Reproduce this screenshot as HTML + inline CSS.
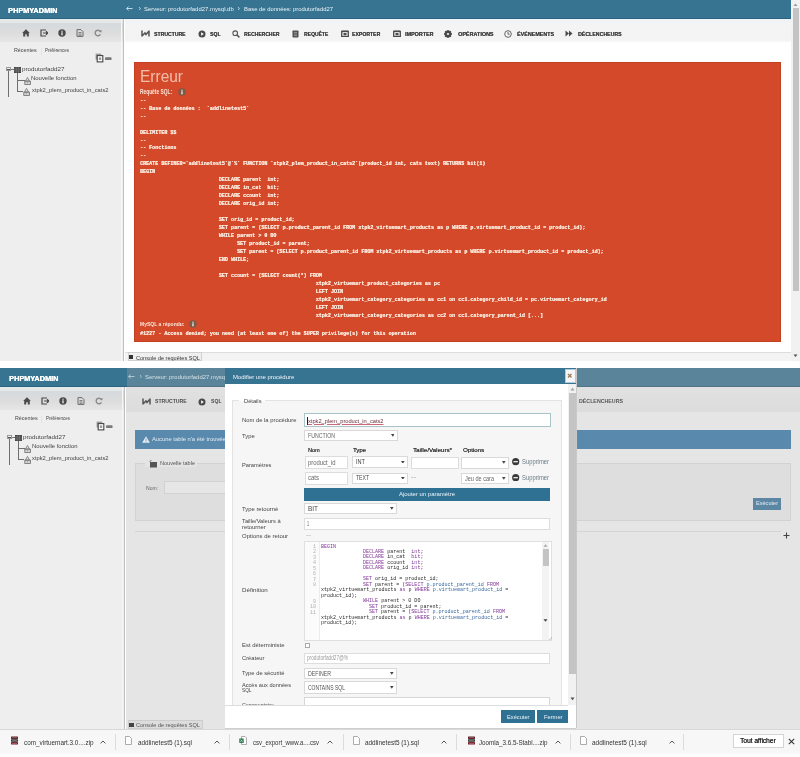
<!DOCTYPE html><html><head><meta charset="utf-8"><style>
*{margin:0;padding:0;box-sizing:border-box}
html,body{width:800px;height:757px;overflow:hidden;background:#fff;position:relative}
#r{position:absolute;left:0;top:0;width:800px;height:757px;overflow:hidden;background:#fff;will-change:transform}
#r>div,#r>svg{position:absolute}
#r>div{white-space:pre}
</style></head><body><div id="r">
<div style="left:124.5px;top:18.5px;width:666.5px;height:343px;background:#fff"></div>
<div style="left:0px;top:0px;width:800px;height:18.5px;background:#377492"></div>
<div style="left:0px;top:17.5px;width:800px;height:1px;background:#2d6380"></div>
<div style="left:8px;top:6.55px;font:bold 7.9px/7.9px 'Liberation Sans',sans-serif;color:#fff;transform:scaleX(0.9266);transform-origin:0 0;text-shadow:0.3px 0 0 #fff">PHPMYADMIN</div>
<div style="left:0px;top:18.5px;width:124px;height:342.5px;background:#eeeeee"></div>
<div style="left:0px;top:18.5px;width:124px;height:4.5px;background:#e4e8e9"></div>
<div style="left:0px;top:23.0px;width:124px;height:18.5px;background:linear-gradient(#d5dadd,#dcdcdc 50%,#e6e6e6)"></div>
<div style="left:121px;top:18.5px;width:1px;height:342.5px;background:#f6f6f6"></div>
<div style="left:123.2px;top:18.5px;width:1.2px;height:342.5px;background:#bebebe"></div>
<svg style="left:22.2px;top:28.8px" width="8" height="8" viewBox="0 0 8 8"><path d="M4 0.3 L7.8 4 L6.8 4 L6.8 7.6 L4.8 7.6 L4.8 5.2 L3.2 5.2 L3.2 7.6 L1.2 7.6 L1.2 4 L0.2 4 Z" fill="#4a4a4a"/></svg>
<svg style="left:40px;top:28.8px" width="8" height="8" viewBox="0 0 8 8"><path d="M6 1 H1 V7 H6" fill="none" stroke="#4a4a4a" stroke-width="1.2"/><path d="M3 4 H7.8 M6 2.3 L7.8 4 L6 5.7" fill="none" stroke="#4a4a4a" stroke-width="1.2"/></svg>
<svg style="left:57.8px;top:28.8px" width="8" height="8" viewBox="0 0 8 8"><circle cx="4" cy="4" r="3.7" fill="#4a4a4a"/><rect x="3.4" y="3.3" width="1.2" height="3" fill="#fff"/><circle cx="4" cy="2.2" r="0.65" fill="#fff"/></svg>
<svg style="left:75.8px;top:28.8px" width="8" height="8" viewBox="0 0 8 8"><path d="M1 0.6 H5 L7 2.6 V7.4 H1 Z" fill="none" stroke="#6a6a6a" stroke-width="1"/><path d="M2.5 3.5 H5.5 M2.5 5 H5.5 M2.5 6.3 H5.5" stroke="#6a6a6a" stroke-width="0.8"/></svg>
<svg style="left:94px;top:28.8px" width="8" height="8" viewBox="0 0 8 8"><path d="M6.6 3 A2.8 2.8 0 1 0 6.4 5.4" fill="none" stroke="#8a8a8a" stroke-width="1.4"/><path d="M5 2.6 L7.4 3.4 L7.6 0.8 Z" fill="#8a8a8a"/></svg>
<div style="left:13.8px;top:48.05px;font:normal 5.9px/5.9px 'Liberation Sans',sans-serif;color:#444;transform:scaleX(0.9080);transform-origin:0 0;">Récentes</div>
<div style="left:40.5px;top:47.5px;width:0.6px;height:7px;background:#e2e2e2"></div>
<div style="left:45.2px;top:48.05px;font:normal 5.9px/5.9px 'Liberation Sans',sans-serif;color:#444;transform:scaleX(0.7555);transform-origin:0 0;">Préférences</div>
<svg style="left:95px;top:52.5px" width="18" height="10" viewBox="0 0 18 10"><rect x="0.6" y="0.6" width="5.6" height="6" fill="#9a9a9a"/><rect x="2.2" y="2.6" width="5.6" height="6.3" fill="#fff" stroke="#444" stroke-width="1.1"/><rect x="3.8" y="4.4" width="2.4" height="2.6" fill="#999"/><rect x="10" y="4.2" width="6.6" height="2.8" rx="0.8" fill="#7a7a7a"/></svg>
<div style="left:6.4px;top:67.1px;width:4.5px;height:4.2px;border:0.8px solid #999;background:#f4f4f4"></div>
<div style="left:7.3px;top:69px;width:2.6px;height:0.6px;background:#555"></div>
<div style="left:8.2px;top:71.3px;width:0.8px;height:26px;background:#6f6f6f"></div>
<div style="left:10.9px;top:69.1px;width:3px;height:0.7px;background:#777"></div>
<svg style="left:13.9px;top:66.6px" width="7" height="6" viewBox="0 0 7 6"><rect x="0" y="0" width="7" height="6" fill="#454545"/><path d="M0 2 H7 M0 4 H7 M2.3 0 V6 M4.6 0 V6" stroke="#8a8a8a" stroke-width="0.5"/></svg>
<div style="left:21.75px;top:65.70px;font:normal 6px/6px 'Liberation Sans',sans-serif;color:#444;transform:scaleX(1.0441);transform-origin:0 0;">produtorfadd27</div>
<div style="left:17.1px;top:72.8px;width:0.8px;height:18.8px;background:#6f6f6f"></div>
<div style="left:17.1px;top:80px;width:7.6px;height:0.8px;background:#6f6f6f"></div>
<div style="left:17.1px;top:91px;width:6px;height:0.8px;background:#6f6f6f"></div>
<svg style="left:23.6px;top:76.8px" width="7" height="8" viewBox="0 0 7 8"><path d="M3.5 0.5 L1.5 4 H5.5 Z" fill="none" stroke="#6a6a6a" stroke-width="0.8"/><rect x="0.8" y="4.2" width="5.6" height="3.2" fill="none" stroke="#6a6a6a" stroke-width="0.8"/><path d="M2 5.2 V6.6 M3.5 5.2 V6.6 M5 5.2 V6.6" stroke="#6a6a6a" stroke-width="0.6"/></svg>
<svg style="left:23.2px;top:88px" width="7" height="8" viewBox="0 0 7 8"><path d="M3.5 0.5 L1.5 4 H5.5 Z" fill="none" stroke="#6a6a6a" stroke-width="0.8"/><rect x="0.8" y="4.2" width="5.6" height="3.2" fill="none" stroke="#6a6a6a" stroke-width="0.8"/><path d="M2 5.2 V6.6 M3.5 5.2 V6.6 M5 5.2 V6.6" stroke="#6a6a6a" stroke-width="0.6"/></svg>
<div style="left:31.1px;top:76.25px;font:normal 5.9px/5.9px 'Liberation Sans',sans-serif;color:#444;transform:scaleX(1.0066);transform-origin:0 0;">Nouvelle fonction</div>
<div style="left:31.6px;top:87.85px;font:normal 5.9px/5.9px 'Liberation Sans',sans-serif;color:#444;transform:scaleX(0.9774);transform-origin:0 0;">xtpk2_plem_product_in_cats2</div>
<div style="left:124.5px;top:18.5px;width:666.5px;height:23.5px;background:linear-gradient(#eef3f6,#f4f4f4 30%,#f3f3f3 85%,#f8f8f8)"></div>
<svg style="left:126.2px;top:5.6px" width="7" height="5" viewBox="0 0 7 5"><path d="M0.6 2.5 H6.5 M2.6 0.5 L0.6 2.5 L2.6 4.5" fill="none" stroke="#cfe3ef" stroke-width="0.9"/></svg>
<div style="left:138.4px;top:4.85px;font:normal 7.5px/7.5px 'Liberation Sans',sans-serif;color:#cfe3ef;">›</div>
<div style="left:143.8px;top:5.90px;font:normal 6px/6px 'Liberation Sans',sans-serif;color:#eaf2f6;transform:scaleX(0.9888);transform-origin:0 0;">Serveur: produtorfadd27.mysql.db</div>
<div style="left:237.4px;top:4.85px;font:normal 7.5px/7.5px 'Liberation Sans',sans-serif;color:#cfe3ef;">›</div>
<div style="left:243.5px;top:5.90px;font:normal 6px/6px 'Liberation Sans',sans-serif;color:#eaf2f6;transform:scaleX(0.9807);transform-origin:0 0;">Base de données: produtorfadd27</div>
<div style="left:153.7px;top:31.55px;font:bold 5.9px/5.9px 'Liberation Sans',sans-serif;color:#444;transform:scaleX(0.8671);transform-origin:0 0;text-shadow:0.2px 0 0 #444">STRUCTURE</div>
<div style="left:210px;top:31.55px;font:bold 5.9px/5.9px 'Liberation Sans',sans-serif;color:#444;transform:scaleX(0.8671);transform-origin:0 0;text-shadow:0.2px 0 0 #444">SQL</div>
<div style="left:243.7px;top:31.55px;font:bold 5.9px/5.9px 'Liberation Sans',sans-serif;color:#444;transform:scaleX(0.8538);transform-origin:0 0;text-shadow:0.2px 0 0 #444">RECHERCHER</div>
<div style="left:303.7px;top:31.55px;font:bold 5.9px/5.9px 'Liberation Sans',sans-serif;color:#444;transform:scaleX(0.8531);transform-origin:0 0;text-shadow:0.2px 0 0 #444">REQUÊTE</div>
<div style="left:352px;top:31.55px;font:bold 5.9px/5.9px 'Liberation Sans',sans-serif;color:#444;transform:scaleX(0.8702);transform-origin:0 0;text-shadow:0.2px 0 0 #444">EXPORTER</div>
<div style="left:405px;top:31.55px;font:bold 5.9px/5.9px 'Liberation Sans',sans-serif;color:#444;transform:scaleX(0.9166);transform-origin:0 0;text-shadow:0.2px 0 0 #444">IMPORTER</div>
<div style="left:457.5px;top:31.55px;font:bold 5.9px/5.9px 'Liberation Sans',sans-serif;color:#444;transform:scaleX(0.9217);transform-origin:0 0;text-shadow:0.2px 0 0 #444">OPÉRATIONS</div>
<div style="left:516.5px;top:31.55px;font:bold 5.9px/5.9px 'Liberation Sans',sans-serif;color:#444;transform:scaleX(0.9115);transform-origin:0 0;text-shadow:0.2px 0 0 #444">ÉVÉNEMENTS</div>
<div style="left:577.5px;top:31.55px;font:bold 5.9px/5.9px 'Liberation Sans',sans-serif;color:#444;transform:scaleX(0.8861);transform-origin:0 0;text-shadow:0.2px 0 0 #444">DÉCLENCHEURS</div>
<svg style="left:141px;top:30.2px" width="9" height="7" viewBox="0 0 9 7"><path d="M1 0.5 V6.5 M8 0.5 V6.5 M1 6 L4 3 L5 4.5 L8 1" fill="none" stroke="#555" stroke-width="1.5"/></svg>
<svg style="left:197.7px;top:29.8px" width="8" height="8" viewBox="0 0 8 8"><circle cx="4" cy="4" r="3.5" fill="#4a4a4a"/><path d="M3.1 2.2 L5.8 4 L3.1 5.8 Z" fill="#fff"/></svg>
<svg style="left:231.8px;top:29.8px" width="8" height="8" viewBox="0 0 8 8"><circle cx="3.2" cy="3.2" r="2.3" fill="none" stroke="#555" stroke-width="1.1"/><path d="M4.8 4.8 L7.4 7.4" stroke="#555" stroke-width="1.5"/></svg>
<svg style="left:291.5px;top:29.8px" width="7" height="8" viewBox="0 0 7 8"><rect x="0.5" y="0.5" width="6" height="7" rx="0.8" fill="#4a4a4a"/><path d="M1.8 2.3 H5.2 M1.8 4 H5.2 M1.8 5.7 H5.2" stroke="#ccc" stroke-width="0.6"/></svg>
<svg style="left:340.5px;top:30.3px" width="8" height="7" viewBox="0 0 8 7"><rect x="0.7" y="1.5" width="6.6" height="5" fill="none" stroke="#4a4a4a" stroke-width="1.3"/><rect x="2.5" y="3" width="3" height="2.3" fill="#4a4a4a"/><path d="M0.7 1 H7.3" stroke="#4a4a4a" stroke-width="1"/></svg>
<svg style="left:392.5px;top:30.3px" width="8" height="7" viewBox="0 0 8 7"><rect x="0.7" y="1.5" width="6.6" height="5" fill="none" stroke="#4a4a4a" stroke-width="1.3"/><rect x="2.5" y="3" width="3" height="2.3" fill="#4a4a4a"/><path d="M0.7 1 H7.3" stroke="#4a4a4a" stroke-width="1"/></svg>
<svg style="left:444px;top:29.8px" width="8" height="8" viewBox="0 0 8 8"><circle cx="4" cy="4" r="2.6" fill="none" stroke="#4a4a4a" stroke-width="1.6"/><path d="M4 0 V8 M0 4 H8 M1.2 1.2 L6.8 6.8 M6.8 1.2 L1.2 6.8" stroke="#4a4a4a" stroke-width="1.3"/><circle cx="4" cy="4" r="1.1" fill="#f4f4f4"/></svg>
<svg style="left:504px;top:29.8px" width="8" height="8" viewBox="0 0 8 8"><circle cx="4" cy="4" r="3.3" fill="none" stroke="#555" stroke-width="0.9"/><path d="M4 2 V4.2 H5.6" fill="none" stroke="#555" stroke-width="0.9"/></svg>
<svg style="left:565px;top:30.3px" width="8" height="7" viewBox="0 0 8 7"><path d="M0.5 0.5 L4 3.5 L0.5 6.5 Z M4 0.5 L7.5 3.5 L4 6.5 Z" fill="#4a4a4a"/></svg>
<div style="left:134.3px;top:61.7px;width:646.5px;height:280px;background:#d3492a;border:0.8px solid #c23f22"></div>
<div style="left:139.5px;top:68.05px;font:normal 16.5px/16.5px 'Liberation Sans',sans-serif;color:rgba(250,222,205,0.78);transform:scaleX(0.9380);transform-origin:0 0;">Erreur</div>
<div style="left:140px;top:88.95px;font:bold 6.3px/6.3px 'Liberation Sans',sans-serif;color:#fbe6d8;transform:scaleX(0.7685);transform-origin:0 0;">Requête SQL:</div>
<svg style="left:177.5px;top:87.5px" width="8" height="8" viewBox="0 0 8 8"><circle cx="4" cy="4" r="3.7" fill="#7a5a48"/><rect x="3.4" y="3.3" width="1.2" height="3" fill="#fff"/><circle cx="4" cy="2.2" r="0.65" fill="#fff"/></svg>
<div style="left:139.5px;top:97.65px;font:bold 5.9px/5.9px 'Liberation Mono',monospace;color:#fbe6d8;transform:scaleX(0.8562);transform-origin:0 0;text-shadow:0.25px 0 0 #fbe6d8">--</div>
<div style="left:139.5px;top:105.62px;font:bold 5.9px/5.9px 'Liberation Mono',monospace;color:#fbe6d8;transform:scaleX(0.8571);transform-origin:0 0;text-shadow:0.25px 0 0 #fbe6d8">-- Base de données :  `addlinetest5`</div>
<div style="left:139.5px;top:113.59px;font:bold 5.9px/5.9px 'Liberation Mono',monospace;color:#fbe6d8;transform:scaleX(0.8562);transform-origin:0 0;text-shadow:0.25px 0 0 #fbe6d8">--</div>
<div style="left:139.5px;top:129.53px;font:bold 5.9px/5.9px 'Liberation Mono',monospace;color:#fbe6d8;transform:scaleX(0.8571);transform-origin:0 0;text-shadow:0.25px 0 0 #fbe6d8">DELIMITER $$</div>
<div style="left:139.5px;top:137.50px;font:bold 5.9px/5.9px 'Liberation Mono',monospace;color:#fbe6d8;transform:scaleX(0.8562);transform-origin:0 0;text-shadow:0.25px 0 0 #fbe6d8">--</div>
<div style="left:139.5px;top:145.47px;font:bold 5.9px/5.9px 'Liberation Mono',monospace;color:#fbe6d8;transform:scaleX(0.8571);transform-origin:0 0;text-shadow:0.25px 0 0 #fbe6d8">-- Fonctions</div>
<div style="left:139.5px;top:153.44px;font:bold 5.9px/5.9px 'Liberation Mono',monospace;color:#fbe6d8;transform:scaleX(0.8562);transform-origin:0 0;text-shadow:0.25px 0 0 #fbe6d8">--</div>
<div style="left:139.5px;top:161.41px;font:bold 5.9px/5.9px 'Liberation Mono',monospace;color:#fbe6d8;transform:scaleX(0.8571);transform-origin:0 0;text-shadow:0.25px 0 0 #fbe6d8">CREATE DEFINER=`addlinetest5`@`%` FUNCTION `xtpk2_plem_product_in_cats2`(product_id int, cats text) RETURNS bit(1)</div>
<div style="left:139.5px;top:169.38px;font:bold 5.9px/5.9px 'Liberation Mono',monospace;color:#fbe6d8;transform:scaleX(0.8565);transform-origin:0 0;text-shadow:0.25px 0 0 #fbe6d8">BEGIN</div>
<div style="left:139.5px;top:177.35px;font:bold 5.9px/5.9px 'Liberation Mono',monospace;color:#fbe6d8;transform:scaleX(0.8571);transform-origin:0 0;text-shadow:0.25px 0 0 #fbe6d8">                          DECLARE parent  int;</div>
<div style="left:139.5px;top:185.32px;font:bold 5.9px/5.9px 'Liberation Mono',monospace;color:#fbe6d8;transform:scaleX(0.8571);transform-origin:0 0;text-shadow:0.25px 0 0 #fbe6d8">                          DECLARE in_cat  bit;</div>
<div style="left:139.5px;top:193.29px;font:bold 5.9px/5.9px 'Liberation Mono',monospace;color:#fbe6d8;transform:scaleX(0.8571);transform-origin:0 0;text-shadow:0.25px 0 0 #fbe6d8">                          DECLARE ccount  int;</div>
<div style="left:139.5px;top:201.26px;font:bold 5.9px/5.9px 'Liberation Mono',monospace;color:#fbe6d8;transform:scaleX(0.8571);transform-origin:0 0;text-shadow:0.25px 0 0 #fbe6d8">                          DECLARE orig_id int;</div>
<div style="left:139.5px;top:217.20px;font:bold 5.9px/5.9px 'Liberation Mono',monospace;color:#fbe6d8;transform:scaleX(0.8571);transform-origin:0 0;text-shadow:0.25px 0 0 #fbe6d8">                          SET orig_id = product_id;</div>
<div style="left:139.5px;top:225.17px;font:bold 5.9px/5.9px 'Liberation Mono',monospace;color:#fbe6d8;transform:scaleX(0.8572);transform-origin:0 0;text-shadow:0.25px 0 0 #fbe6d8">                          SET parent = (SELECT p.product_parent_id FROM xtpk2_virtuemart_products as p WHERE p.virtuemart_product_id = product_id);</div>
<div style="left:139.5px;top:233.14px;font:bold 5.9px/5.9px 'Liberation Mono',monospace;color:#fbe6d8;transform:scaleX(0.8571);transform-origin:0 0;text-shadow:0.25px 0 0 #fbe6d8">                          WHILE parent &gt; 0 DO</div>
<div style="left:139.5px;top:241.11px;font:bold 5.9px/5.9px 'Liberation Mono',monospace;color:#fbe6d8;transform:scaleX(0.8571);transform-origin:0 0;text-shadow:0.25px 0 0 #fbe6d8">                                SET product_id = parent;</div>
<div style="left:139.5px;top:249.08px;font:bold 5.9px/5.9px 'Liberation Mono',monospace;color:#fbe6d8;transform:scaleX(0.8571);transform-origin:0 0;text-shadow:0.25px 0 0 #fbe6d8">                                SET parent = (SELECT p.product_parent_id FROM xtpk2_virtuemart_products as p WHERE p.virtuemart_product_id = product_id);</div>
<div style="left:139.5px;top:257.05px;font:bold 5.9px/5.9px 'Liberation Mono',monospace;color:#fbe6d8;transform:scaleX(0.8571);transform-origin:0 0;text-shadow:0.25px 0 0 #fbe6d8">                          END WHILE;</div>
<div style="left:139.5px;top:272.99px;font:bold 5.9px/5.9px 'Liberation Mono',monospace;color:#fbe6d8;transform:scaleX(0.8571);transform-origin:0 0;text-shadow:0.25px 0 0 #fbe6d8">                          SET ccount = (SELECT count(*) FROM</div>
<div style="left:139.5px;top:280.96px;font:bold 5.9px/5.9px 'Liberation Mono',monospace;color:#fbe6d8;transform:scaleX(0.8571);transform-origin:0 0;text-shadow:0.25px 0 0 #fbe6d8">                                                          xtpk2_virtuemart_product_categories as pc</div>
<div style="left:139.5px;top:288.93px;font:bold 5.9px/5.9px 'Liberation Mono',monospace;color:#fbe6d8;transform:scaleX(0.8571);transform-origin:0 0;text-shadow:0.25px 0 0 #fbe6d8">                                                          LEFT JOIN</div>
<div style="left:139.5px;top:296.90px;font:bold 5.9px/5.9px 'Liberation Mono',monospace;color:#fbe6d8;transform:scaleX(0.8571);transform-origin:0 0;text-shadow:0.25px 0 0 #fbe6d8">                                                          xtpk2_virtuemart_category_categories as cc1 on cc1.category_child_id = pc.virtuemart_category_id</div>
<div style="left:139.5px;top:304.87px;font:bold 5.9px/5.9px 'Liberation Mono',monospace;color:#fbe6d8;transform:scaleX(0.8571);transform-origin:0 0;text-shadow:0.25px 0 0 #fbe6d8">                                                          LEFT JOIN</div>
<div style="left:139.5px;top:312.84px;font:bold 5.9px/5.9px 'Liberation Mono',monospace;color:#fbe6d8;transform:scaleX(0.8571);transform-origin:0 0;text-shadow:0.25px 0 0 #fbe6d8">                                                          xtpk2_virtuemart_category_categories as cc2 on cc1.category_parent_id [...]</div>
<div style="left:140px;top:321.10px;font:bold 6.2px/6.2px 'Liberation Sans',sans-serif;color:#fbe6d8;transform:scaleX(0.8107);transform-origin:0 0;">MySQL a répondu:</div>
<svg style="left:189px;top:320.2px" width="8" height="8" viewBox="0 0 8 8"><circle cx="4" cy="4" r="3.7" fill="#7a5a48"/><rect x="3.4" y="3.3" width="1.2" height="3" fill="#fff"/><circle cx="4" cy="2.2" r="0.65" fill="#fff"/></svg>
<div style="left:139.5px;top:330.65px;font:bold 5.9px/5.9px 'Liberation Mono',monospace;color:#fbe6d8;transform:scaleX(0.8571);transform-origin:0 0;text-shadow:0.25px 0 0 #fbe6d8">#1227 - Access denied; you need (at least one of) the SUPER privilege(s) for this operation</div>
<div style="left:124.5px;top:352.4px;width:666.5px;height:8.6px;background:#f3f3f3;border-top:1px solid #ddd"></div>
<div style="left:128px;top:352.4px;width:74px;height:8.6px;background:#efefef;border:1px solid #d0d0d0"></div>
<div style="left:128.6px;top:355.3px;width:4.6px;height:4.2px;background:#333"></div>
<div style="left:135.6px;top:354.70px;font:normal 6.2px/6.2px 'Liberation Sans',sans-serif;color:#333;transform:scaleX(0.8960);transform-origin:0 0;">Console de requêtes SQL</div>
<div style="left:791.3px;top:0px;width:8.7px;height:361px;background:#f1f1f1"></div>
<div style="left:792.5px;top:8px;width:6.7px;height:283px;background:#c3c3c3"></div>
<svg style="left:793.4px;top:3.3px" width="5" height="3.5" viewBox="0 0 5 3.5"><path d="M0.5 3 L2.5 0.5 L4.5 3 Z" fill="#9a9a9a"/></svg>
<svg style="left:793.4px;top:354.3px" width="5" height="3.5" viewBox="0 0 5 3.5"><path d="M0.5 0.5 L2.5 3 L4.5 0.5 Z" fill="#505050"/></svg>
<div style="left:0px;top:368px;width:800px;height:18.6px;background:#377492"></div>
<div style="left:0px;top:385.6px;width:800px;height:1px;background:#2d6380"></div>
<div style="left:8.8px;top:374.55px;font:bold 7.9px/7.9px 'Liberation Sans',sans-serif;color:#fff;transform:scaleX(0.9266);transform-origin:0 0;text-shadow:0.3px 0 0 #fff">PHPMYADMIN</div>
<div style="left:0px;top:386.6px;width:124.8px;height:342.4px;background:#eeeeee"></div>
<div style="left:0px;top:386.6px;width:124.8px;height:4.5px;background:#e4e8e9"></div>
<div style="left:0px;top:391.1px;width:124.8px;height:18.5px;background:linear-gradient(#d5dadd,#dcdcdc 50%,#e6e6e6)"></div>
<div style="left:121.8px;top:386.6px;width:1px;height:342.4px;background:#f6f6f6"></div>
<div style="left:124.0px;top:386.6px;width:1.2px;height:342.4px;background:#bebebe"></div>
<svg style="left:23.0px;top:396.8px" width="8" height="8" viewBox="0 0 8 8"><path d="M4 0.3 L7.8 4 L6.8 4 L6.8 7.6 L4.8 7.6 L4.8 5.2 L3.2 5.2 L3.2 7.6 L1.2 7.6 L1.2 4 L0.2 4 Z" fill="#4a4a4a"/></svg>
<svg style="left:40.8px;top:396.8px" width="8" height="8" viewBox="0 0 8 8"><path d="M6 1 H1 V7 H6" fill="none" stroke="#4a4a4a" stroke-width="1.2"/><path d="M3 4 H7.8 M6 2.3 L7.8 4 L6 5.7" fill="none" stroke="#4a4a4a" stroke-width="1.2"/></svg>
<svg style="left:58.599999999999994px;top:396.8px" width="8" height="8" viewBox="0 0 8 8"><circle cx="4" cy="4" r="3.7" fill="#4a4a4a"/><rect x="3.4" y="3.3" width="1.2" height="3" fill="#fff"/><circle cx="4" cy="2.2" r="0.65" fill="#fff"/></svg>
<svg style="left:76.6px;top:396.8px" width="8" height="8" viewBox="0 0 8 8"><path d="M1 0.6 H5 L7 2.6 V7.4 H1 Z" fill="none" stroke="#6a6a6a" stroke-width="1"/><path d="M2.5 3.5 H5.5 M2.5 5 H5.5 M2.5 6.3 H5.5" stroke="#6a6a6a" stroke-width="0.8"/></svg>
<svg style="left:94.8px;top:396.8px" width="8" height="8" viewBox="0 0 8 8"><path d="M6.6 3 A2.8 2.8 0 1 0 6.4 5.4" fill="none" stroke="#8a8a8a" stroke-width="1.4"/><path d="M5 2.6 L7.4 3.4 L7.6 0.8 Z" fill="#8a8a8a"/></svg>
<div style="left:14.600000000000001px;top:416.05px;font:normal 5.9px/5.9px 'Liberation Sans',sans-serif;color:#444;transform:scaleX(0.9080);transform-origin:0 0;">Récentes</div>
<div style="left:41.3px;top:415.5px;width:0.6px;height:7px;background:#e2e2e2"></div>
<div style="left:46.0px;top:416.05px;font:normal 5.9px/5.9px 'Liberation Sans',sans-serif;color:#444;transform:scaleX(0.7555);transform-origin:0 0;">Préférences</div>
<svg style="left:95.8px;top:420.5px" width="18" height="10" viewBox="0 0 18 10"><rect x="0.6" y="0.6" width="5.6" height="6" fill="#9a9a9a"/><rect x="2.2" y="2.6" width="5.6" height="6.3" fill="#fff" stroke="#444" stroke-width="1.1"/><rect x="3.8" y="4.4" width="2.4" height="2.6" fill="#999"/><rect x="10" y="4.2" width="6.6" height="2.8" rx="0.8" fill="#7a7a7a"/></svg>
<div style="left:7.2px;top:435.1px;width:4.5px;height:4.2px;border:0.8px solid #999;background:#f4f4f4"></div>
<div style="left:8.1px;top:437px;width:2.6px;height:0.6px;background:#555"></div>
<div style="left:9.0px;top:439.3px;width:0.8px;height:26px;background:#6f6f6f"></div>
<div style="left:11.700000000000001px;top:437.1px;width:3px;height:0.7px;background:#777"></div>
<svg style="left:14.700000000000001px;top:434.6px" width="7" height="6" viewBox="0 0 7 6"><rect x="0" y="0" width="7" height="6" fill="#454545"/><path d="M0 2 H7 M0 4 H7 M2.3 0 V6 M4.6 0 V6" stroke="#8a8a8a" stroke-width="0.5"/></svg>
<div style="left:22.55px;top:433.70px;font:normal 6px/6px 'Liberation Sans',sans-serif;color:#444;transform:scaleX(1.0441);transform-origin:0 0;">produtorfadd27</div>
<div style="left:17.900000000000002px;top:440.8px;width:0.8px;height:18.8px;background:#6f6f6f"></div>
<div style="left:17.900000000000002px;top:448px;width:7.6px;height:0.8px;background:#6f6f6f"></div>
<div style="left:17.900000000000002px;top:459px;width:6px;height:0.8px;background:#6f6f6f"></div>
<svg style="left:24.400000000000002px;top:444.8px" width="7" height="8" viewBox="0 0 7 8"><path d="M3.5 0.5 L1.5 4 H5.5 Z" fill="none" stroke="#6a6a6a" stroke-width="0.8"/><rect x="0.8" y="4.2" width="5.6" height="3.2" fill="none" stroke="#6a6a6a" stroke-width="0.8"/><path d="M2 5.2 V6.6 M3.5 5.2 V6.6 M5 5.2 V6.6" stroke="#6a6a6a" stroke-width="0.6"/></svg>
<svg style="left:24.0px;top:456px" width="7" height="8" viewBox="0 0 7 8"><path d="M3.5 0.5 L1.5 4 H5.5 Z" fill="none" stroke="#6a6a6a" stroke-width="0.8"/><rect x="0.8" y="4.2" width="5.6" height="3.2" fill="none" stroke="#6a6a6a" stroke-width="0.8"/><path d="M2 5.2 V6.6 M3.5 5.2 V6.6 M5 5.2 V6.6" stroke="#6a6a6a" stroke-width="0.6"/></svg>
<div style="left:31.900000000000002px;top:444.25px;font:normal 5.9px/5.9px 'Liberation Sans',sans-serif;color:#444;transform:scaleX(1.0066);transform-origin:0 0;">Nouvelle fonction</div>
<div style="left:32.4px;top:455.85px;font:normal 5.9px/5.9px 'Liberation Sans',sans-serif;color:#444;transform:scaleX(0.9774);transform-origin:0 0;">xtpk2_plem_product_in_cats2</div>
<div style="left:125.5px;top:386.6px;width:674.5px;height:342.4px;background:#e5e5e5"></div>
<div style="left:127px;top:368px;width:673px;height:18.6px;background:#5a8499"></div>
<div style="left:127px;top:385.6px;width:673px;height:1px;background:#4f7488"></div>
<svg style="left:127.8px;top:373.6px" width="7" height="5" viewBox="0 0 7 5"><path d="M0.6 2.5 H6.5 M2.6 0.5 L0.6 2.5 L2.6 4.5" fill="none" stroke="#b9d0dc" stroke-width="0.9"/></svg>
<div style="left:139.5px;top:372.75px;font:normal 7.5px/7.5px 'Liberation Sans',sans-serif;color:#b9d0dc;">›</div>
<div style="left:145px;top:373.70px;font:normal 6px/6px 'Liberation Sans',sans-serif;color:#d3e0e7;transform:scaleX(0.9888);transform-origin:0 0;">Serveur: produtorfadd27.mysql.db</div>
<div style="left:125.5px;top:386.6px;width:674.5px;height:25.2px;background:linear-gradient(#e2e1e1,#dddcdc)"></div>
<div style="left:154.6px;top:398.85px;font:bold 5.9px/5.9px 'Liberation Sans',sans-serif;color:#4a4a4a;transform:scaleX(0.8726);transform-origin:0 0;">STRUCTURE</div>
<svg style="left:142px;top:398.3px" width="9" height="7" viewBox="0 0 9 7"><path d="M1 0.5 V6.5 M8 0.5 V6.5 M1 6 L4 3 L5 4.5 L8 1" fill="none" stroke="#555" stroke-width="1.5"/></svg>
<svg style="left:198px;top:398px" width="8" height="8" viewBox="0 0 8 8"><circle cx="4" cy="4" r="3.5" fill="#4a4a4a"/><path d="M3.1 2.2 L5.8 4 L3.1 5.8 Z" fill="#fff"/></svg>
<div style="left:211px;top:398.85px;font:bold 5.9px/5.9px 'Liberation Sans',sans-serif;color:#4a4a4a;transform:scaleX(0.8671);transform-origin:0 0;">SQL</div>
<div style="left:578.6px;top:399.35px;font:bold 5.9px/5.9px 'Liberation Sans',sans-serif;color:#555;transform:scaleX(0.8962);transform-origin:0 0;">DÉCLENCHEURS</div>
<div style="left:135px;top:429.7px;width:656px;height:19.1px;background:#5989ad"></div>
<svg style="left:142px;top:435.5px" width="8" height="7" viewBox="0 0 8 7"><path d="M4 0.3 L7.8 6.8 H0.2 Z" fill="#e8eef3"/><rect x="3.6" y="2.4" width="0.8" height="2.4" fill="#5989ad"/><rect x="3.6" y="5.3" width="0.8" height="0.8" fill="#5989ad"/></svg>
<div style="left:152px;top:437.45px;font:normal 5.9px/5.9px 'Liberation Sans',sans-serif;color:#e3ebf1;transform:scaleX(0.9861);transform-origin:0 0;">Aucune table n&#x27;a été trouvée dans cette base de données.</div>
<div style="left:135px;top:463px;width:656px;height:57.7px;background:#dedede;border:0.8px solid #d2d2d2"></div>
<div style="left:145px;top:459px;width:52px;height:8px;background:#e4e4e4"></div>
<svg style="left:149px;top:459.5px" width="9" height="8" viewBox="0 0 9 8"><rect x="1" y="2" width="7" height="5.5" fill="#555"/><path d="M0.5 1.5 L2.5 0.3" stroke="#555" stroke-width="0.8"/></svg>
<div style="left:159.5px;top:461.05px;font:normal 5.9px/5.9px 'Liberation Sans',sans-serif;color:#555;transform:scaleX(0.9372);transform-origin:0 0;">Nouvelle table</div>
<div style="left:145.5px;top:486.05px;font:normal 5.9px/5.9px 'Liberation Sans',sans-serif;color:#666;transform:scaleX(0.8524);transform-origin:0 0;">Nom:</div>
<div style="left:164px;top:481px;width:62px;height:13px;background:#e6e6e6;border:0.8px solid #d2d2d2"></div>
<div style="left:753px;top:497.6px;width:28px;height:12.4px;background:#5b87a5"></div>
<div style="left:756px;top:500.95px;font:normal 5.7px/5.7px 'Liberation Sans',sans-serif;color:#e6eef4;transform:scaleX(0.9798);transform-origin:0 0;">Exécuter</div>
<div style="left:135px;top:530.7px;width:646px;height:0.8px;background:#d4d4d4"></div>
<svg style="left:783px;top:531.5px" width="7" height="7" viewBox="0 0 7 7"><path d="M3.5 0.5 V6.5 M0.5 3.5 H6.5" stroke="#444" stroke-width="1.1"/></svg>
<div style="left:127.6px;top:720.4px;width:75px;height:8.6px;background:#dddddd;border:0.8px solid #cdcdcd"></div>
<div style="left:129.3px;top:723.3px;width:4.6px;height:4.2px;background:#444"></div>
<div style="left:136.3px;top:721.80px;font:normal 6.2px/6.2px 'Liberation Sans',sans-serif;color:#555;transform:scaleX(0.8960);transform-origin:0 0;">Console de requêtes SQL</div>
<div style="left:225px;top:368.4px;width:351px;height:360px;background:#fff"></div>
<div style="left:225px;top:368.4px;width:351px;height:15.6px;background:#377492"></div>
<div style="left:233.1px;top:373.50px;font:normal 6px/6px 'Liberation Sans',sans-serif;color:#f2f7fa;transform:scaleX(0.9935);transform-origin:0 0;">Modifier une procédure</div>
<div style="left:564.5px;top:369.2px;width:11px;height:14px;background:#f4f6f7;border:0.6px solid #b7c9d3"></div>
<svg style="left:567.3px;top:373.2px" width="5.5" height="5.5" viewBox="0 0 5.5 5.5"><path d="M1 1 L4.5 4.5 M4.5 1 L1 4.5" stroke="#9c7a52" stroke-width="1.3"/></svg>
<div style="left:568px;top:384px;width:8px;height:321px;background:#f1f1f1"></div>
<div style="left:569px;top:392.8px;width:6.5px;height:281px;background:#c4c4c4"></div>
<svg style="left:569.5px;top:386.5px" width="5" height="4" viewBox="0 0 5 4"><path d="M0.5 3.5 L2.5 0.8 L4.5 3.5 Z" fill="#a3a3a3"/></svg>
<svg style="left:569.5px;top:696.5px" width="5" height="4" viewBox="0 0 5 4"><path d="M0.5 0.5 L2.5 3.2 L4.5 0.5 Z" fill="#505050"/></svg>
<div style="left:232px;top:400.25px;width:330px;height:305px;background:#f6f6f6;border:0.8px solid #e3e3e3;border-bottom:none"></div>
<div style="left:239px;top:396px;width:26px;height:5px;background:#fff"></div>
<div style="left:243.75px;top:398.10px;font:normal 6.2px/6.2px 'Liberation Sans',sans-serif;color:#444;transform:scaleX(0.9249);transform-origin:0 0;">Détails</div>
<div style="left:242.2px;top:418.35px;font:normal 5.9px/5.9px 'Liberation Sans',sans-serif;color:#444;transform:scaleX(0.9906);transform-origin:0 0;">Nom de la procédure</div>
<div style="left:304.2px;top:412.8px;width:246.4px;height:14.4px;background:#fff;border:0.8px solid #a9c4c8"></div>
<div style="left:307.5px;top:417.50px;font:normal 6.2px/6.2px 'Liberation Sans',sans-serif;color:#6d2a3a;transform:scaleX(0.9183);transform-origin:0 0;text-decoration:underline;text-decoration-color:#c9687a">xtpk2_plem_product_in_cats2</div>
<div style="left:307.3px;top:416.5px;width:0.6px;height:8.5px;background:#222"></div>
<div style="left:242.2px;top:433.55px;font:normal 5.9px/5.9px 'Liberation Sans',sans-serif;color:#444;transform:scaleX(1.0015);transform-origin:0 0;">Type</div>
<div style="left:304.2px;top:430.3px;width:93.6px;height:11.2px;background:#fff;border:0.8px solid #d9d9d9"></div>
<div style="left:308.2px;top:433.00px;font:normal 6.8px/6.8px 'Liberation Sans',sans-serif;color:#666;transform:scaleX(0.7687);transform-origin:0 0;">FUNCTION</div>
<svg style="left:390.59999999999997px;top:434.20000000000005px" width="3.6" height="2.8" viewBox="0 0 3.6 2.8"><path d="M0 0 H3.6 L1.8 2.8 Z" fill="#444"/></svg>
<div style="left:307.5px;top:446.70px;font:normal 6.2px/6.2px 'Liberation Sans',sans-serif;color:#333;transform:scaleX(0.8793);transform-origin:0 0;text-shadow:0.2px 0 0 #333">Nom</div>
<div style="left:353.2px;top:446.70px;font:normal 6.2px/6.2px 'Liberation Sans',sans-serif;color:#333;transform:scaleX(0.9686);transform-origin:0 0;text-shadow:0.2px 0 0 #333">Type</div>
<div style="left:413.2px;top:446.60px;font:normal 6.2px/6.2px 'Liberation Sans',sans-serif;color:#333;transform:scaleX(1.0065);transform-origin:0 0;text-shadow:0.2px 0 0 #333">Taille/Valeurs*</div>
<div style="left:462.7px;top:446.60px;font:normal 6.2px/6.2px 'Liberation Sans',sans-serif;color:#333;transform:scaleX(0.9846);transform-origin:0 0;text-shadow:0.2px 0 0 #333">Options</div>
<div style="left:242.2px;top:462.95px;font:normal 5.9px/5.9px 'Liberation Sans',sans-serif;color:#444;transform:scaleX(0.9654);transform-origin:0 0;">Paramètres</div>
<div style="left:304.6px;top:456.2px;width:43.8px;height:12.8px;background:#fff;border:0.8px solid #dddddd"></div>
<div style="left:307.6px;top:459.55px;font:normal 6.5px/6.5px 'Liberation Sans',sans-serif;color:#666;transform:scaleX(0.9058);transform-origin:0 0;">product_id</div>
<div style="left:351.7px;top:456.2px;width:56.5px;height:12px;background:#fff;border:0.8px solid #d9d9d9"></div>
<div style="left:355.7px;top:459.30px;font:normal 6.8px/6.8px 'Liberation Sans',sans-serif;color:#444;transform:scaleX(0.8217);transform-origin:0 0;">INT</div>
<svg style="left:401.0px;top:460.5px" width="3.6" height="2.8" viewBox="0 0 3.6 2.8"><path d="M0 0 H3.6 L1.8 2.8 Z" fill="#444"/></svg>
<div style="left:410.7px;top:456.9px;width:48px;height:12.4px;background:#fff;border:0.8px solid #dddddd"></div>
<div style="left:461px;top:456.9px;width:48.4px;height:12.4px;background:#fff;border:0.8px solid #d9d9d9"></div>
<svg style="left:502.2px;top:461.4px" width="3.6" height="2.8" viewBox="0 0 3.6 2.8"><path d="M0 0 H3.6 L1.8 2.8 Z" fill="#444"/></svg>
<div style="left:304.6px;top:472px;width:43.8px;height:12.7px;background:#fff;border:0.8px solid #dddddd"></div>
<div style="left:307.6px;top:475.30px;font:normal 6.5px/6.5px 'Liberation Sans',sans-serif;color:#666;transform:scaleX(0.9227);transform-origin:0 0;">cats</div>
<div style="left:351.7px;top:472.7px;width:56.5px;height:11.3px;background:#fff;border:0.8px solid #d9d9d9"></div>
<div style="left:355.7px;top:475.45px;font:normal 6.8px/6.8px 'Liberation Sans',sans-serif;color:#444;transform:scaleX(0.7482);transform-origin:0 0;">TEXT</div>
<svg style="left:401.0px;top:476.65px" width="3.6" height="2.8" viewBox="0 0 3.6 2.8"><path d="M0 0 H3.6 L1.8 2.8 Z" fill="#444"/></svg>
<div style="left:411px;top:475.05px;font:normal 5.9px/5.9px 'Liberation Sans',sans-serif;color:#888;transform:scaleX(1.2698);transform-origin:0 0;">--</div>
<div style="left:461px;top:472.7px;width:48.4px;height:11.7px;background:#fff;border:0.8px solid #d9d9d9"></div>
<div style="left:465px;top:475.65px;font:normal 6.8px/6.8px 'Liberation Sans',sans-serif;color:#666;transform:scaleX(0.8162);transform-origin:0 0;">Jeu de cara</div>
<svg style="left:502.2px;top:476.85px" width="3.6" height="2.8" viewBox="0 0 3.6 2.8"><path d="M0 0 H3.6 L1.8 2.8 Z" fill="#444"/></svg>
<svg style="left:512.4px;top:458.4px" width="7.4" height="7.4" viewBox="0 0 7.4 7.4"><circle cx="3.7" cy="3.7" r="3.6" fill="#3a3a3a"/><rect x="1.5" y="3.1" width="4.4" height="1.2" fill="#fff"/></svg>
<div style="left:521.8px;top:459.40px;font:normal 6.4px/6.4px 'Liberation Sans',sans-serif;color:#6a7d86;transform:scaleX(0.9157);transform-origin:0 0;">Supprimer</div>
<svg style="left:512.4px;top:474.0px" width="7.4" height="7.4" viewBox="0 0 7.4 7.4"><circle cx="3.7" cy="3.7" r="3.6" fill="#3a3a3a"/><rect x="1.5" y="3.1" width="4.4" height="1.2" fill="#fff"/></svg>
<div style="left:521.8px;top:475.00px;font:normal 6.4px/6.4px 'Liberation Sans',sans-serif;color:#6a7d86;transform:scaleX(0.9157);transform-origin:0 0;">Supprimer</div>
<div style="left:304.2px;top:488.3px;width:246.2px;height:12.5px;background:#2f7193"></div>
<div style="left:399px;top:491.20px;font:normal 6px/6px 'Liberation Sans',sans-serif;color:#eef4f8;transform:scaleX(0.9933);transform-origin:0 0;">Ajouter un paramètre</div>
<div style="left:242.2px;top:506.85px;font:normal 5.9px/5.9px 'Liberation Sans',sans-serif;color:#444;transform:scaleX(0.9984);transform-origin:0 0;">Type retourné</div>
<div style="left:304.2px;top:503.4px;width:93.2px;height:10.4px;background:#fff;border:0.8px solid #d9d9d9"></div>
<div style="left:308.2px;top:505.70px;font:normal 6.8px/6.8px 'Liberation Sans',sans-serif;color:#444;transform:scaleX(0.9453);transform-origin:0 0;">BIT</div>
<svg style="left:390.2px;top:506.9px" width="3.6" height="2.8" viewBox="0 0 3.6 2.8"><path d="M0 0 H3.6 L1.8 2.8 Z" fill="#444"/></svg>
<div style="left:242.2px;top:519.25px;font:normal 5.9px/5.9px 'Liberation Sans',sans-serif;color:#444;transform:scaleX(0.9768);transform-origin:0 0;">Taille/Valeurs à</div>
<div style="left:242.2px;top:524.95px;font:normal 5.9px/5.9px 'Liberation Sans',sans-serif;color:#444;transform:scaleX(0.9956);transform-origin:0 0;">retourner</div>
<div style="left:304.2px;top:517.5px;width:246.2px;height:12.6px;background:#fff;border:0.8px solid #dddddd"></div>
<div style="left:307.2px;top:520.75px;font:normal 6.5px/6.5px 'Liberation Sans',sans-serif;color:#555;transform:scaleX(0.5517);transform-origin:0 0;">1</div>
<div style="left:242.2px;top:533.55px;font:normal 5.9px/5.9px 'Liberation Sans',sans-serif;color:#444;transform:scaleX(1.0106);transform-origin:0 0;">Options de retour</div>
<div style="left:305.5px;top:532.55px;font:normal 5.9px/5.9px 'Liberation Sans',sans-serif;color:#999;transform:scaleX(1.2698);transform-origin:0 0;">--</div>
<div style="left:242.2px;top:587.65px;font:normal 5.9px/5.9px 'Liberation Sans',sans-serif;color:#444;transform:scaleX(1.0504);transform-origin:0 0;">Définition</div>
<div style="left:304px;top:540.8px;width:247.5px;height:99.8px;background:#fff;border:0.8px solid #e0e0e0"></div>
<div style="left:304.8px;top:541.6px;width:14px;height:98.2px;background:#fbfbfb"></div>
<div style="left:318.6px;top:541.6px;width:0.7px;height:98.2px;background:#ececec"></div>
<div style="left:542.2px;top:541.6px;width:7px;height:98px;background:#f3f3f3"></div>
<div style="left:542.6px;top:548.8px;width:6.2px;height:17.5px;background:#c4c4c4"></div>
<svg style="left:543.2px;top:543.5px" width="5" height="3" viewBox="0 0 5 3"><path d="M0.5 2.7 L2.5 0.3 L4.5 2.7 Z" fill="#a8a8a8"/></svg>
<svg style="left:543.2px;top:618.5px" width="5" height="3" viewBox="0 0 5 3"><path d="M0.5 0.3 L2.5 2.7 L4.5 0.3 Z" fill="#404040"/></svg>
<svg style="left:548.5px;top:637px" width="3" height="3" viewBox="0 0 3 3"><path d="M0 3 L3 0 M1.5 3 L3 1.5" stroke="#999" stroke-width="0.5"/></svg>
<div style="left:313.18px;top:543.70px;font:normal 5.6px/5.6px 'Liberation Mono',monospace;color:#b0b0b0;transform:scaleX(0.8990);transform-origin:0 0;">1</div>
<div style="left:313.18px;top:549.19px;font:normal 5.6px/5.6px 'Liberation Mono',monospace;color:#b0b0b0;transform:scaleX(0.8990);transform-origin:0 0;">2</div>
<div style="left:313.18px;top:554.68px;font:normal 5.6px/5.6px 'Liberation Mono',monospace;color:#b0b0b0;transform:scaleX(0.8990);transform-origin:0 0;">3</div>
<div style="left:313.18px;top:560.17px;font:normal 5.6px/5.6px 'Liberation Mono',monospace;color:#b0b0b0;transform:scaleX(0.8990);transform-origin:0 0;">4</div>
<div style="left:313.18px;top:565.66px;font:normal 5.6px/5.6px 'Liberation Mono',monospace;color:#b0b0b0;transform:scaleX(0.8990);transform-origin:0 0;">5</div>
<div style="left:313.18px;top:571.15px;font:normal 5.6px/5.6px 'Liberation Mono',monospace;color:#b0b0b0;transform:scaleX(0.8990);transform-origin:0 0;">6</div>
<div style="left:313.18px;top:576.64px;font:normal 5.6px/5.6px 'Liberation Mono',monospace;color:#b0b0b0;transform:scaleX(0.8990);transform-origin:0 0;">7</div>
<div style="left:313.18px;top:582.13px;font:normal 5.6px/5.6px 'Liberation Mono',monospace;color:#b0b0b0;transform:scaleX(0.8990);transform-origin:0 0;">8</div>
<div style="left:313.18px;top:598.60px;font:normal 5.6px/5.6px 'Liberation Mono',monospace;color:#b0b0b0;transform:scaleX(0.8990);transform-origin:0 0;">9</div>
<div style="left:310.15999999999997px;top:604.09px;font:normal 5.6px/5.6px 'Liberation Mono',monospace;color:#b0b0b0;transform:scaleX(0.8990);transform-origin:0 0;">10</div>
<div style="left:310.15999999999997px;top:609.58px;font:normal 5.6px/5.6px 'Liberation Mono',monospace;color:#b0b0b0;transform:scaleX(0.8990);transform-origin:0 0;">11</div>
<div style="left:321.0px;top:543.50px;font:normal 6px/6px 'Liberation Mono',monospace;color:#2a2a2a;transform:scaleX(0.8389);transform-origin:0 0;"><span style="color:#83389a">BEGIN</span></div>
<div style="left:363.28px;top:548.99px;font:normal 6px/6px 'Liberation Mono',monospace;color:#2a2a2a;transform:scaleX(0.8389);transform-origin:0 0;"><span style="color:#83389a">DECLARE</span><span style="color:#2a2a2a"> parent  </span><span style="color:#83389a">int</span><span style="color:#2a2a2a">;</span></div>
<div style="left:363.28px;top:554.48px;font:normal 6px/6px 'Liberation Mono',monospace;color:#2a2a2a;transform:scaleX(0.8389);transform-origin:0 0;"><span style="color:#83389a">DECLARE</span><span style="color:#2a2a2a"> in_cat  </span><span style="color:#83389a">bit</span><span style="color:#2a2a2a">;</span></div>
<div style="left:363.28px;top:559.97px;font:normal 6px/6px 'Liberation Mono',monospace;color:#2a2a2a;transform:scaleX(0.8389);transform-origin:0 0;"><span style="color:#83389a">DECLARE</span><span style="color:#2a2a2a"> ccount  </span><span style="color:#83389a">int</span><span style="color:#2a2a2a">;</span></div>
<div style="left:363.28px;top:565.46px;font:normal 6px/6px 'Liberation Mono',monospace;color:#2a2a2a;transform:scaleX(0.8389);transform-origin:0 0;"><span style="color:#83389a">DECLARE</span><span style="color:#2a2a2a"> orig_id </span><span style="color:#83389a">int</span><span style="color:#2a2a2a">;</span></div>
<div style="left:363.28px;top:576.44px;font:normal 6px/6px 'Liberation Mono',monospace;color:#2a2a2a;transform:scaleX(0.8389);transform-origin:0 0;"><span style="color:#83389a">SET</span><span style="color:#2a2a2a"> orig_id = product_id;</span></div>
<div style="left:363.28px;top:581.93px;font:normal 6px/6px 'Liberation Mono',monospace;color:#2a2a2a;transform:scaleX(0.8389);transform-origin:0 0;"><span style="color:#83389a">SET</span><span style="color:#2a2a2a"> parent = (</span><span style="color:#83389a">SELECT</span><span style="color:#2a2a2a"> </span><span style="color:#35679f">p.product_parent_id</span><span style="color:#2a2a2a"> </span><span style="color:#83389a">FROM</span></div>
<div style="left:321.0px;top:587.42px;font:normal 6px/6px 'Liberation Mono',monospace;color:#2a2a2a;transform:scaleX(0.8389);transform-origin:0 0;"><span style="color:#2a2a2a">xtpk2_virtuemart_products </span><span style="color:#83389a">as</span><span style="color:#2a2a2a"> p </span><span style="color:#83389a">WHERE</span><span style="color:#2a2a2a"> </span><span style="color:#35679f">p.virtuemart_product_id</span><span style="color:#2a2a2a"> =</span></div>
<div style="left:321.0px;top:592.91px;font:normal 6px/6px 'Liberation Mono',monospace;color:#2a2a2a;transform:scaleX(0.8389);transform-origin:0 0;"><span style="color:#2a2a2a">product_id);</span></div>
<div style="left:363.28px;top:598.40px;font:normal 6px/6px 'Liberation Mono',monospace;color:#2a2a2a;transform:scaleX(0.8389);transform-origin:0 0;"><span style="color:#83389a">WHILE</span><span style="color:#2a2a2a"> parent &gt; 0 DO</span></div>
<div style="left:369.32px;top:603.89px;font:normal 6px/6px 'Liberation Mono',monospace;color:#2a2a2a;transform:scaleX(0.8389);transform-origin:0 0;"><span style="color:#83389a">SET</span><span style="color:#2a2a2a"> product_id = parent;</span></div>
<div style="left:369.32px;top:609.38px;font:normal 6px/6px 'Liberation Mono',monospace;color:#2a2a2a;transform:scaleX(0.8389);transform-origin:0 0;"><span style="color:#83389a">SET</span><span style="color:#2a2a2a"> parent = (</span><span style="color:#83389a">SELECT</span><span style="color:#2a2a2a"> </span><span style="color:#35679f">p.product_parent_id</span><span style="color:#2a2a2a"> </span><span style="color:#83389a">FROM</span></div>
<div style="left:321.0px;top:614.87px;font:normal 6px/6px 'Liberation Mono',monospace;color:#2a2a2a;transform:scaleX(0.8389);transform-origin:0 0;"><span style="color:#2a2a2a">xtpk2_virtuemart_products </span><span style="color:#83389a">as</span><span style="color:#2a2a2a"> p </span><span style="color:#83389a">WHERE</span><span style="color:#2a2a2a"> </span><span style="color:#35679f">p.virtuemart_product_id</span><span style="color:#2a2a2a"> =</span></div>
<div style="left:321.0px;top:620.36px;font:normal 6px/6px 'Liberation Mono',monospace;color:#2a2a2a;transform:scaleX(0.8389);transform-origin:0 0;"><span style="color:#2a2a2a">product_id);</span></div>
<div style="left:242.2px;top:643.35px;font:normal 5.9px/5.9px 'Liberation Sans',sans-serif;color:#444;transform:scaleX(1.0063);transform-origin:0 0;">Est déterministe</div>
<div style="left:304.8px;top:642.8px;width:5.4px;height:5.4px;background:#fff;border:0.8px solid #aaa"></div>
<div style="left:242.2px;top:656.15px;font:normal 5.9px/5.9px 'Liberation Sans',sans-serif;color:#444;transform:scaleX(0.9816);transform-origin:0 0;">Créateur</div>
<div style="left:304.2px;top:652.5px;width:246.2px;height:11.7px;background:#fff;border:0.8px solid #dddddd"></div>
<div style="left:307.2px;top:655.30px;font:normal 6.5px/6.5px 'Liberation Sans',sans-serif;color:#999;transform:scaleX(0.7261);transform-origin:0 0;">produtorfadd27@%</div>
<div style="left:242.2px;top:671.25px;font:normal 5.9px/5.9px 'Liberation Sans',sans-serif;color:#444;transform:scaleX(0.9830);transform-origin:0 0;">Type de sécurité</div>
<div style="left:304.2px;top:668.3px;width:93.2px;height:10.7px;background:#fff;border:0.8px solid #d9d9d9"></div>
<div style="left:308.2px;top:670.75px;font:normal 6.8px/6.8px 'Liberation Sans',sans-serif;color:#555;transform:scaleX(0.7707);transform-origin:0 0;">DEFINER</div>
<svg style="left:390.2px;top:671.9499999999999px" width="3.6" height="2.8" viewBox="0 0 3.6 2.8"><path d="M0 0 H3.6 L1.8 2.8 Z" fill="#444"/></svg>
<div style="left:242.2px;top:682.75px;font:normal 5.9px/5.9px 'Liberation Sans',sans-serif;color:#444;transform:scaleX(0.9529);transform-origin:0 0;">Accès aux données</div>
<div style="left:242.2px;top:688.05px;font:normal 5.9px/5.9px 'Liberation Sans',sans-serif;color:#444;transform:scaleX(0.8053);transform-origin:0 0;">SQL</div>
<div style="left:304.2px;top:681.3px;width:93.2px;height:12.5px;background:#fff;border:0.8px solid #d9d9d9"></div>
<div style="left:308.2px;top:684.65px;font:normal 6.8px/6.8px 'Liberation Sans',sans-serif;color:#555;transform:scaleX(0.7384);transform-origin:0 0;">CONTAINS SQL</div>
<svg style="left:390.2px;top:685.8499999999999px" width="3.6" height="2.8" viewBox="0 0 3.6 2.8"><path d="M0 0 H3.6 L1.8 2.8 Z" fill="#444"/></svg>
<div style="left:242.2px;top:702.95px;font:normal 5.9px/5.9px 'Liberation Sans',sans-serif;color:#444;transform:scaleX(0.9050);transform-origin:0 0;">Commentaire</div>
<div style="left:304.2px;top:696.5px;width:246.2px;height:9px;background:#fff;border:0.8px solid #d6d6d6"></div>
<div style="left:225px;top:704.6px;width:343px;height:23.6px;background:#fff;border-top:0.8px solid #dedede"></div>
<div style="left:576px;top:368.4px;width:0.8px;height:360px;background:#c9c9c9"></div>
<div style="left:225px;top:728px;width:351px;height:0.8px;background:#cfcfcf"></div>
<div style="left:501px;top:710px;width:34px;height:12.8px;background:#2f7193"></div>
<div style="left:507px;top:714.15px;font:normal 6.1px/6.1px 'Liberation Sans',sans-serif;color:#eef4f8;transform:scaleX(0.9351);transform-origin:0 0;">Exécuter</div>
<div style="left:537.4px;top:710px;width:30.6px;height:12.8px;background:#2f7193"></div>
<div style="left:543.5px;top:714.15px;font:normal 6.1px/6.1px 'Liberation Sans',sans-serif;color:#eef4f8;transform:scaleX(0.9419);transform-origin:0 0;">Fermer</div>
<div style="left:0px;top:729.2px;width:800px;height:23.5px;background:#f7f7f7;border-top:0.8px solid #d8d8d8"></div>
<div style="left:0px;top:752.5px;width:800px;height:0.9px;background:#bdbdbd"></div>
<div style="left:0px;top:753.4px;width:800px;height:3.6px;background:#fdfdfd"></div>
<svg style="left:9.5px;top:736.4px" width="9" height="9" viewBox="0 0 9 9"><rect x="1" y="0.5" width="7" height="2.4" rx="0.6" fill="#5a1a22"/><rect x="1" y="3.3" width="7" height="2.4" rx="0.6" fill="#2a2a2a"/><rect x="1" y="6.1" width="7" height="2.4" rx="0.6" fill="#7a1e2a"/><path d="M2 1.7 H7 M2 4.5 H7 M2 7.3 H7" stroke="#ddd" stroke-width="0.4"/></svg>
<div style="left:24.4px;top:739.55px;font:normal 6.3px/6.3px 'Liberation Sans',sans-serif;color:#333;transform:scaleX(1.0094);transform-origin:0 0;">com_virtuemart.3.0....zip</div>
<svg style="left:99.5px;top:739.5px" width="6" height="4" viewBox="0 0 6 4"><path d="M0.6 3.4 L3 1 L5.4 3.4" fill="none" stroke="#555" stroke-width="1"/></svg>
<div style="left:115.4px;top:734px;width:0.8px;height:16px;background:#dcdcdc"></div>
<svg style="left:125px;top:736px" width="7" height="9" viewBox="0 0 7 9"><path d="M0.5 0.5 H4.5 L6.5 2.5 V8.5 H0.5 Z" fill="#fff" stroke="#8a8a8a" stroke-width="0.7"/></svg>
<div style="left:138px;top:739.55px;font:normal 6.3px/6.3px 'Liberation Sans',sans-serif;color:#333;transform:scaleX(1.0147);transform-origin:0 0;">addlinetest5 (1).sql</div>
<svg style="left:213.8px;top:739.5px" width="6" height="4" viewBox="0 0 6 4"><path d="M0.6 3.4 L3 1 L5.4 3.4" fill="none" stroke="#555" stroke-width="1"/></svg>
<div style="left:229px;top:734px;width:0.8px;height:16px;background:#dcdcdc"></div>
<svg style="left:239px;top:736px" width="8" height="9" viewBox="0 0 8 9"><path d="M2.5 0.5 H6 L7.5 2 V8.5 H2.5 Z" fill="#fff" stroke="#8a8a8a" stroke-width="0.7"/><rect x="0.3" y="2.5" width="4.4" height="4.4" fill="#217346"/><path d="M1.3 3.5 L3.7 5.9 M3.7 3.5 L1.3 5.9" stroke="#fff" stroke-width="0.6"/></svg>
<div style="left:252.5px;top:739.55px;font:normal 6.3px/6.3px 'Liberation Sans',sans-serif;color:#333;transform:scaleX(0.9572);transform-origin:0 0;">csv_export_www.a....csv</div>
<svg style="left:327px;top:739.5px" width="6" height="4" viewBox="0 0 6 4"><path d="M0.6 3.4 L3 1 L5.4 3.4" fill="none" stroke="#555" stroke-width="1"/></svg>
<div style="left:342.5px;top:734px;width:0.8px;height:16px;background:#dcdcdc"></div>
<svg style="left:353px;top:736px" width="7" height="9" viewBox="0 0 7 9"><path d="M0.5 0.5 H4.5 L6.5 2.5 V8.5 H0.5 Z" fill="#fff" stroke="#8a8a8a" stroke-width="0.7"/></svg>
<div style="left:365px;top:739.55px;font:normal 6.3px/6.3px 'Liberation Sans',sans-serif;color:#333;transform:scaleX(1.0147);transform-origin:0 0;">addlinetest5 (1).sql</div>
<svg style="left:441px;top:739.5px" width="6" height="4" viewBox="0 0 6 4"><path d="M0.6 3.4 L3 1 L5.4 3.4" fill="none" stroke="#555" stroke-width="1"/></svg>
<div style="left:456px;top:734px;width:0.8px;height:16px;background:#dcdcdc"></div>
<svg style="left:467px;top:736.4px" width="9" height="9" viewBox="0 0 9 9"><rect x="1" y="0.5" width="7" height="2.4" rx="0.6" fill="#5a1a22"/><rect x="1" y="3.3" width="7" height="2.4" rx="0.6" fill="#2a2a2a"/><rect x="1" y="6.1" width="7" height="2.4" rx="0.6" fill="#7a1e2a"/><path d="M2 1.7 H7 M2 4.5 H7 M2 7.3 H7" stroke="#ddd" stroke-width="0.4"/></svg>
<div style="left:479px;top:739.55px;font:normal 6.3px/6.3px 'Liberation Sans',sans-serif;color:#333;transform:scaleX(0.9883);transform-origin:0 0;">Joomla_3.6.5-Stabl....zip</div>
<svg style="left:554.5px;top:739.5px" width="6" height="4" viewBox="0 0 6 4"><path d="M0.6 3.4 L3 1 L5.4 3.4" fill="none" stroke="#555" stroke-width="1"/></svg>
<div style="left:570px;top:734px;width:0.8px;height:16px;background:#dcdcdc"></div>
<svg style="left:579.5px;top:736px" width="7" height="9" viewBox="0 0 7 9"><path d="M0.5 0.5 H4.5 L6.5 2.5 V8.5 H0.5 Z" fill="#fff" stroke="#8a8a8a" stroke-width="0.7"/></svg>
<div style="left:592.4px;top:739.55px;font:normal 6.3px/6.3px 'Liberation Sans',sans-serif;color:#333;transform:scaleX(1.0260);transform-origin:0 0;">addlinetest5 (1).sql</div>
<svg style="left:668.7px;top:739.5px" width="6" height="4" viewBox="0 0 6 4"><path d="M0.6 3.4 L3 1 L5.4 3.4" fill="none" stroke="#555" stroke-width="1"/></svg>
<div style="left:683px;top:734px;width:0.8px;height:16px;background:#dcdcdc"></div>
<div style="left:732.7px;top:734px;width:51px;height:13.5px;background:#fff;border:0.8px solid #d4d4d4"></div>
<div style="left:740px;top:738.05px;font:normal 6.5px/6.5px 'Liberation Sans',sans-serif;color:#222;transform:scaleX(1.0086);transform-origin:0 0;text-shadow:0.25px 0 0 #222">Tout afficher</div>
<svg style="left:788px;top:737.8px" width="7" height="7" viewBox="0 0 7 7"><path d="M0.8 0.8 L6.2 6.2 M6.2 0.8 L0.8 6.2" stroke="#333" stroke-width="1.1"/></svg>
</div></body></html>
